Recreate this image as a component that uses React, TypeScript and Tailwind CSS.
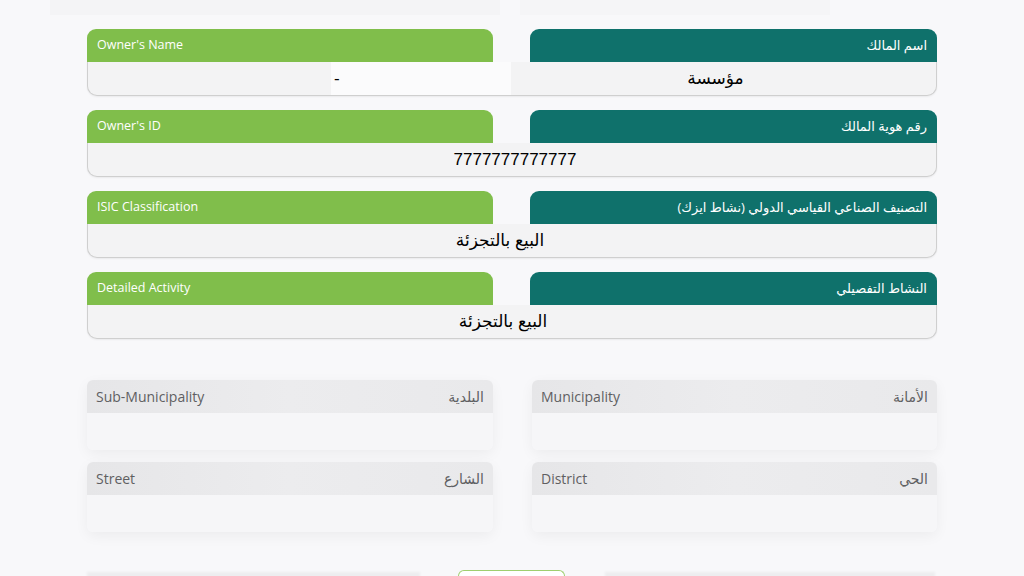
import React from "react";

const head = "font-['Open_Sans','DejaVu_Sans',sans-serif]";
const val = "font-['Liberation_Sans','DejaVu_Sans',sans-serif]";

type Row = { en: string; ar: string; value: React.ReactNode; align: string };

const rows: Row[] = [
  {
    en: "Owner's Name",
    ar: "اسم المالك",
    align: "",
    value: (
      <div className="flex h-full items-stretch">
        <div className="w-[243px]" />
        <div className="flex w-[180px] items-center bg-[#fbfbfc] pl-[3px]">-</div>
        <div className="flex flex-1 items-center justify-center pr-[16px]">مؤسسة</div>
      </div>
    ),
  },
  { en: "Owner's ID", ar: "رقم هوية المالك", align: "pl-[6px]", value: "7777777777777" },
  { en: "ISIC Classification", ar: "التصنيف الصناعي القياسي الدولي (نشاط ايزك)", align: "pr-[24px]", value: "البيع بالتجزئة" },
  { en: "Detailed Activity", ar: "النشاط التفصيلي", align: "pr-[18px]", value: "البيع بالتجزئة" },
];

const address = [
  [
    { en: "Sub-Municipality", ar: "البلدية" },
    { en: "Municipality", ar: "الأمانة" },
  ],
  [
    { en: "Street", ar: "الشارع" },
    { en: "District", ar: "الحي" },
  ],
];

function InfoRow({ row }: { row: Row }) {
  return (
    <div className="mb-[14px]">
      {/* headers */}
      <div className="grid grid-cols-[406px_407px] justify-between">
        <div className={`flex h-[33px] items-center rounded-t-[9px] bg-[#80be4b] pl-[10px] text-[12.5px] font-medium text-white ${head}`}>
          {row.en}
        </div>
        <div dir="rtl" className={`flex h-[33px] items-center rounded-t-[9px] bg-[#0f716b] pr-[10px] text-[13px] text-white ${head}`}>
          {row.ar}
        </div>
      </div>
      {/* value strip */}
      <div className={`h-[34px] rounded-b-[10px] border-b border-r border-l border-[#cfcfcf] bg-[#f3f3f4] text-[17px] text-black shadow-[0_1px_2px_rgba(0,0,0,0.06)] ${val}`}>
        {typeof row.value === "string" ? (
          <div className={`flex h-full items-center justify-center ${row.align}`}>{row.value}</div>
        ) : (
          row.value
        )}
      </div>
    </div>
  );
}

function AddressCard({ en, ar }: { en: string; ar: string }) {
  return (
    <div className="rounded-[6px] shadow-[0_4px_14px_rgba(0,0,0,0.05)]">
      <div className={`flex h-[33px] items-center justify-between rounded-t-[6px] bg-gradient-to-r from-[#e6e6e8] via-[#ececee] to-[#e9e9eb] px-[9px] text-[14px] text-[#5f5f62] ${head}`}>
        <span>{en}</span>
        <span>{ar}</span>
      </div>
      <div className="h-[37px] rounded-b-[6px] bg-[#f6f6f8]" />
    </div>
  );
}

export default function App() {
  return (
    <div className="relative h-[576px] w-[1024px] overflow-hidden bg-[#f8f8fa]">
      {/* faint content above */}
      <div className="flex h-[15px] gap-[20px] pl-[50px]">
        <div className="w-[450px] bg-[#f4f4f6]" />
        <div className="w-[310px] bg-[#f5f5f7]" />
      </div>

      <div className="mx-auto w-[850px] pt-[14px]">
        {rows.map((r) => (
          <InfoRow key={r.en} row={r} />
        ))}

        <div className="mt-[41px] flex flex-col gap-[12px]">
          {address.map((pair, i) => (
            <div key={i} className="grid grid-cols-[406px_405px] justify-between">
              {pair.map((c) => (
                <AddressCard key={c.en} en={c.en} ar={c.ar} />
              ))}
            </div>
          ))}
        </div>

        {/* next section peeking at the bottom */}
        <div className="mt-[38px] flex items-start">
          <div className="mt-[2px] h-[12px] w-[333px] bg-[#ededef] blur-[1px]" />
          <div className="ml-[38px] h-[14px] w-[107px] rounded-t-[6px] border-l border-r border-t border-[#9fcf6f] bg-white" />
          <div className="ml-[40px] mt-[2px] h-[12px] w-[330px] bg-[#ededef] blur-[1px]" />
        </div>
      </div>
    </div>
  );
}
